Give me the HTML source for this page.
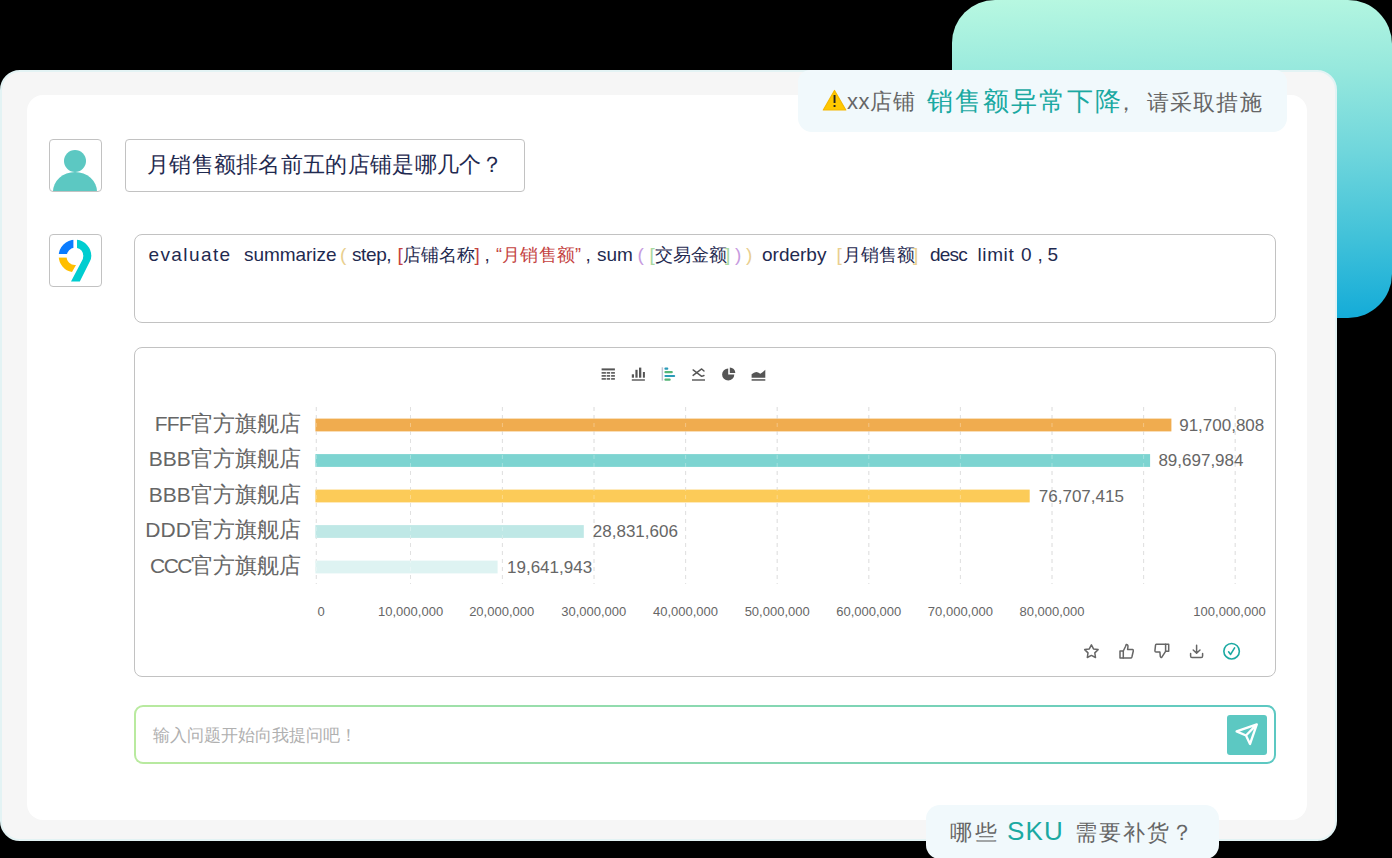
<!DOCTYPE html>
<html><head><meta charset="utf-8">
<style>
*{margin:0;padding:0;box-sizing:border-box}
html,body{width:1392px;height:858px;overflow:hidden;background:#000;font-family:"Liberation Sans",sans-serif}
.abs{position:absolute}
#grad{left:952px;top:0;width:440px;height:318px;border-radius:43px 44px 44px 0;background:linear-gradient(178deg,#b8f8e1 0%,#96e8dd 25%,#6fd6dc 50%,#42c2d9 75%,#13abd8 100%)}
#outer{left:0;top:70px;width:1337px;height:771px;border-radius:20px;background:#f6f6f6;border:2px solid #e3f3f4}
#inner{left:27px;top:95px;width:1280px;height:725px;border-radius:16px;background:#fff}
#pill1{left:798px;top:70px;width:489px;height:62px;border-radius:12px 12px 14px 14px;background:#f1f9fc}
#pill2{left:926px;top:805px;width:293px;height:54px;border-radius:14px;background:#f1f9fc}
.box{border:1px solid #c2c2c2;border-radius:4px;background:#fff}
.txt{white-space:nowrap;line-height:1}
svg{position:absolute;overflow:visible}
</style></head><body>
<div class="abs" id="grad"></div>
<div class="abs" id="outer"></div>
<div class="abs" id="inner"></div>
<div class="abs" id="pill1"></div>
<div class="abs" id="pill2"></div>
<svg style="left:0;top:0" width="1" height="1"><g>
<path d="M834.5,90.5 L845.8,110 L823.3,110 Z" fill="#ffc800" stroke="#f5b800" stroke-width="1.2" stroke-linejoin="round"/>
<rect x="833.6" y="95" width="1.9" height="8" fill="#222"/><rect x="833.6" y="105" width="1.9" height="2" fill="#222"/>
</g></svg>
<div class="abs txt" style="left:847.0px;top:90.9px;font-size:22px;color:#666;letter-spacing:0.6px;">xx店铺</div>
<div class="abs txt" style="left:927.0px;top:87.7px;font-size:26px;color:#1aa9a2;letter-spacing:2.0px;">销售额异常下降</div>
<div class="abs txt" style="left:1115.0px;top:91.9px;font-size:22px;color:#666;letter-spacing:0px;">，</div>
<div class="abs txt" style="left:1146.5px;top:91.9px;font-size:22px;color:#666;letter-spacing:1.3px;">请采取措施</div>
<div class="abs txt" style="left:950.0px;top:822.4px;font-size:22px;color:#666;letter-spacing:3px;">哪些</div>
<div class="abs txt" style="left:1007.0px;top:818.0px;font-size:26px;color:#1aa9a2;letter-spacing:1.2px;">SKU</div>
<div class="abs txt" style="left:1075.0px;top:822.4px;font-size:22px;color:#666;letter-spacing:2px;">需要补货？</div>
<div class="abs box" style="left:49px;top:139px;width:53px;height:53px;overflow:hidden">
  <div class="abs" style="left:14px;top:10px;width:22px;height:22px;border-radius:50%;background:#5cc8c2"></div>
  <div class="abs" style="left:3px;top:32px;width:44px;height:40px;border-radius:22px 22px 0 0/20px 20px 0 0;background:#5cc8c2"></div>
</div>
<div class="abs box" style="left:125px;top:139px;width:400px;height:53px"></div>
<div class="abs txt" style="left:147.0px;top:153.7px;font-size:22px;color:#1f2a50;letter-spacing:0.3px;">月销售额排名前五的店铺是哪几个？</div>
<div class="abs box" style="left:49px;top:234px;width:53px;height:53px"></div>
<svg style="left:0;top:0" width="1" height="1">
<path d="M58.7,256 A16.3,16.3 0 0 1 75,239.7 L75,247.7 A8.3,8.3 0 0 0 66.7,256 Z" fill="#0a7cff"/>
<path d="M58.7,256 A16.3,16.3 0 0 0 72,272 L76,265 A8.3,8.3 0 0 1 66.7,256 Z" fill="#ffbe00"/>
<rect x="73.4" y="238" width="3.6" height="12" fill="#fff"/>
<rect x="57" y="254" width="12" height="3.6" fill="#fff"/>
<path d="M77,239.8 A16.3,16.3 0 0 1 91.3,256 Q91.3,259 89.8,261.5 L79.8,281.5 L71,281.5 L81.8,261 Q83.3,258.5 83.3,256 A8.3,8.3 0 0 0 77,247.9 Z" fill="#00cdd0"/>
</svg>
<div class="abs box" style="left:134px;top:234px;width:1142px;height:89px;border-radius:8px"></div>
<div class="abs txt" style="left:148.5px;top:244.9px;font-size:19px;color:#1f2a50;letter-spacing:1.4px;">evaluate</div>
<div class="abs txt" style="left:244.0px;top:244.9px;font-size:19px;color:#1f2a50;letter-spacing:-0.05px;">summarize</div>
<div class="abs txt" style="left:340.0px;top:244.9px;font-size:19px;color:#e9cf8f;letter-spacing:0px;">(</div>
<div class="abs txt" style="left:352.0px;top:244.9px;font-size:19px;color:#1f2a50;letter-spacing:-0.4px;">step,</div>
<div class="abs txt" style="left:397.5px;top:244.9px;font-size:19px;color:#c4423f;letter-spacing:0px;">[</div>
<div class="abs txt" style="left:403.0px;top:245.8px;font-size:18px;color:#1f2a50;letter-spacing:0px;">店铺名称</div>
<div class="abs txt" style="left:474.5px;top:244.9px;font-size:19px;color:#c4423f;letter-spacing:0px;">]</div>
<div class="abs txt" style="left:484.5px;top:244.9px;font-size:19px;color:#1f2a50;letter-spacing:0px;">,</div>
<div class="abs txt" style="left:496.0px;top:245.8px;font-size:18px;color:#c4423f;letter-spacing:0.2px;">“月销售额”</div>
<div class="abs txt" style="left:585.5px;top:244.9px;font-size:19px;color:#1f2a50;letter-spacing:0px;">,</div>
<div class="abs txt" style="left:597.0px;top:244.9px;font-size:19px;color:#1f2a50;letter-spacing:0px;">sum</div>
<div class="abs txt" style="left:637.5px;top:244.9px;font-size:19px;color:#c79be0;letter-spacing:0px;">(</div>
<div class="abs txt" style="left:649.5px;top:244.9px;font-size:19px;color:#a9d8a0;letter-spacing:0px;">[</div>
<div class="abs txt" style="left:655.0px;top:245.8px;font-size:18px;color:#1f2a50;letter-spacing:0px;">交易金额</div>
<div class="abs txt" style="left:725.0px;top:244.9px;font-size:19px;color:#a9d8a0;letter-spacing:0px;">]</div>
<div class="abs txt" style="left:735.0px;top:244.9px;font-size:19px;color:#c79be0;letter-spacing:0px;">)</div>
<div class="abs txt" style="left:746.0px;top:244.9px;font-size:19px;color:#e9cf8f;letter-spacing:0px;">)</div>
<div class="abs txt" style="left:762.0px;top:244.9px;font-size:19px;color:#1f2a50;letter-spacing:0px;">orderby</div>
<div class="abs txt" style="left:836.5px;top:244.9px;font-size:19px;color:#e9cf8f;letter-spacing:0px;">[</div>
<div class="abs txt" style="left:842.5px;top:245.8px;font-size:18px;color:#1f2a50;letter-spacing:0px;">月销售额</div>
<div class="abs txt" style="left:913.0px;top:244.9px;font-size:19px;color:#e9cf8f;letter-spacing:0px;">]</div>
<div class="abs txt" style="left:930.0px;top:244.9px;font-size:19px;color:#1f2a50;letter-spacing:-0.8px;">desc</div>
<div class="abs txt" style="left:977.5px;top:244.9px;font-size:19px;color:#1f2a50;letter-spacing:0.6px;">limit</div>
<div class="abs txt" style="left:1021.0px;top:244.9px;font-size:19px;color:#1f2a50;letter-spacing:0px;">0</div>
<div class="abs txt" style="left:1037.5px;top:244.9px;font-size:19px;color:#1f2a50;letter-spacing:0px;">,</div>
<div class="abs txt" style="left:1047.5px;top:244.9px;font-size:19px;color:#1f2a50;letter-spacing:0px;">5</div>
<div class="abs box" style="left:134px;top:347px;width:1142px;height:330px;border-radius:8px"></div>
<svg style="left:0;top:0" width="1" height="1"><line x1="316.3" y1="407" x2="316.3" y2="584" stroke="#d4d4d4" stroke-width="1" stroke-dasharray="4 4"/><line x1="410.5" y1="407" x2="410.5" y2="584" stroke="#d4d4d4" stroke-width="1" stroke-dasharray="4 4"/><line x1="502.4" y1="407" x2="502.4" y2="584" stroke="#d4d4d4" stroke-width="1" stroke-dasharray="4 4"/><line x1="594.0" y1="407" x2="594.0" y2="584" stroke="#d4d4d4" stroke-width="1" stroke-dasharray="4 4"/><line x1="685.5999999999999" y1="407" x2="685.5999999999999" y2="584" stroke="#d4d4d4" stroke-width="1" stroke-dasharray="4 4"/><line x1="777.1999999999999" y1="407" x2="777.1999999999999" y2="584" stroke="#d4d4d4" stroke-width="1" stroke-dasharray="4 4"/><line x1="868.8" y1="407" x2="868.8" y2="584" stroke="#d4d4d4" stroke-width="1" stroke-dasharray="4 4"/><line x1="960.4" y1="407" x2="960.4" y2="584" stroke="#d4d4d4" stroke-width="1" stroke-dasharray="4 4"/><line x1="1052.0" y1="407" x2="1052.0" y2="584" stroke="#d4d4d4" stroke-width="1" stroke-dasharray="4 4"/><line x1="1143.6" y1="407" x2="1143.6" y2="584" stroke="#d4d4d4" stroke-width="1" stroke-dasharray="4 4"/><line x1="1235.1999999999998" y1="407" x2="1235.1999999999998" y2="584" stroke="#d4d4d4" stroke-width="1" stroke-dasharray="4 4"/><rect x="315.4" y="418.6" width="856.0" height="12.8" fill="#f0ac4f"/><rect x="315.4" y="454.1" width="834.7" height="12.8" fill="#7dd4d1"/><rect x="315.4" y="489.6" width="714.3" height="12.8" fill="#fccb58"/><rect x="315.4" y="525.1" width="268.4" height="12.8" fill="#bfe8e6"/><rect x="315.4" y="560.6" width="182.2" height="12.8" fill="#def3f2"/><line x1="316.3" y1="407" x2="316.3" y2="584" stroke="#ffffff" stroke-opacity="0.3" stroke-width="1" stroke-dasharray="4 4"/><line x1="410.5" y1="407" x2="410.5" y2="584" stroke="#ffffff" stroke-opacity="0.3" stroke-width="1" stroke-dasharray="4 4"/><line x1="502.4" y1="407" x2="502.4" y2="584" stroke="#ffffff" stroke-opacity="0.3" stroke-width="1" stroke-dasharray="4 4"/><line x1="594.0" y1="407" x2="594.0" y2="584" stroke="#ffffff" stroke-opacity="0.3" stroke-width="1" stroke-dasharray="4 4"/><line x1="685.5999999999999" y1="407" x2="685.5999999999999" y2="584" stroke="#ffffff" stroke-opacity="0.3" stroke-width="1" stroke-dasharray="4 4"/><line x1="777.1999999999999" y1="407" x2="777.1999999999999" y2="584" stroke="#ffffff" stroke-opacity="0.3" stroke-width="1" stroke-dasharray="4 4"/><line x1="868.8" y1="407" x2="868.8" y2="584" stroke="#ffffff" stroke-opacity="0.3" stroke-width="1" stroke-dasharray="4 4"/><line x1="960.4" y1="407" x2="960.4" y2="584" stroke="#ffffff" stroke-opacity="0.3" stroke-width="1" stroke-dasharray="4 4"/><line x1="1052.0" y1="407" x2="1052.0" y2="584" stroke="#ffffff" stroke-opacity="0.3" stroke-width="1" stroke-dasharray="4 4"/><line x1="1143.6" y1="407" x2="1143.6" y2="584" stroke="#ffffff" stroke-opacity="0.3" stroke-width="1" stroke-dasharray="4 4"/><line x1="1235.1999999999998" y1="407" x2="1235.1999999999998" y2="584" stroke="#ffffff" stroke-opacity="0.3" stroke-width="1" stroke-dasharray="4 4"/></svg>
<div class="abs txt" style="right:1091.2px;top:412.7px;font-size:22px;color:#666"><span style="font-size:21px;letter-spacing:-0.8px">FFF</span>官方旗舰店</div>
<div class="abs txt" style="right:1091.2px;top:448.2px;font-size:22px;color:#666"><span style="font-size:21px;letter-spacing:0px">BBB</span>官方旗舰店</div>
<div class="abs txt" style="right:1091.2px;top:483.7px;font-size:22px;color:#666"><span style="font-size:21px;letter-spacing:0px">BBB</span>官方旗舰店</div>
<div class="abs txt" style="right:1091.2px;top:519.2px;font-size:22px;color:#666"><span style="font-size:21px;letter-spacing:0px">DDD</span>官方旗舰店</div>
<div class="abs txt" style="right:1091.2px;top:554.7px;font-size:22px;color:#666"><span style="font-size:21px;letter-spacing:-1.6px">CCC</span>官方旗舰店</div>
<div class="abs txt" style="left:1179.2px;top:416.9px;font-size:17px;color:#666;letter-spacing:0px;">91,700,808</div>
<div class="abs txt" style="left:1158.4px;top:452.4px;font-size:17px;color:#666;letter-spacing:0px;">89,697,984</div>
<div class="abs txt" style="left:1038.8px;top:487.9px;font-size:17px;color:#666;letter-spacing:0px;">76,707,415</div>
<div class="abs txt" style="left:592.8px;top:523.4px;font-size:17px;color:#666;letter-spacing:0px;">28,831,606</div>
<div class="abs txt" style="left:507.0px;top:558.9px;font-size:17px;color:#666;letter-spacing:0px;">19,641,943</div>
<div class="abs txt" style="left:221.0px;width:200px;text-align:center;top:605.3px;font-size:13px;color:#666">0</div>
<div class="abs txt" style="left:310.6px;width:200px;text-align:center;top:605.3px;font-size:13px;color:#666">10,000,000</div>
<div class="abs txt" style="left:401.7px;width:200px;text-align:center;top:605.3px;font-size:13px;color:#666">20,000,000</div>
<div class="abs txt" style="left:493.8px;width:200px;text-align:center;top:605.3px;font-size:13px;color:#666">30,000,000</div>
<div class="abs txt" style="left:585.5px;width:200px;text-align:center;top:605.3px;font-size:13px;color:#666">40,000,000</div>
<div class="abs txt" style="left:677.2px;width:200px;text-align:center;top:605.3px;font-size:13px;color:#666">50,000,000</div>
<div class="abs txt" style="left:768.8px;width:200px;text-align:center;top:605.3px;font-size:13px;color:#666">60,000,000</div>
<div class="abs txt" style="left:860.4px;width:200px;text-align:center;top:605.3px;font-size:13px;color:#666">70,000,000</div>
<div class="abs txt" style="left:952.0px;width:200px;text-align:center;top:605.3px;font-size:13px;color:#666">80,000,000</div>
<div class="abs txt" style="left:1129.5px;width:200px;text-align:center;top:605.3px;font-size:13px;color:#666">100,000,000</div>
<svg style="left:0;top:0" width="1" height="1">
<g fill="#555">
<rect x="601.6" y="368.4" width="13.3" height="2"/>
<rect x="601.6" y="372.1" width="4.3" height="1.6"/><rect x="606.7" y="372.1" width="3.4" height="1.6"/><rect x="611.1" y="372.1" width="3.8" height="1.6"/>
<rect x="601.6" y="375.1" width="4.3" height="1.6"/><rect x="606.7" y="375.1" width="3.4" height="1.6"/><rect x="611.1" y="375.1" width="3.8" height="1.6"/>
<rect x="601.6" y="378.1" width="4.3" height="1.6"/><rect x="606.7" y="378.1" width="3.4" height="1.6"/><rect x="611.1" y="378.1" width="3.8" height="1.6"/>
<rect x="631.8" y="379.3" width="13.1" height="1.4"/>
<rect x="631.8" y="374.3" width="2.2" height="3.4"/><rect x="635.4" y="369.8" width="2.2" height="7.9"/><rect x="639" y="367.6" width="2.3" height="10.1"/><rect x="642.9" y="372" width="2" height="5.7"/>
</g>
<rect x="661.6" y="367.3" width="1.5" height="13.4" fill="#c2c2d2"/>
<rect x="664.4" y="367.5" width="3.9" height="2.2" rx="1" fill="#2a9bb8"/>
<rect x="664.4" y="371.1" width="8.4" height="2.1" rx="1" fill="#55b577"/>
<rect x="664.4" y="374.9" width="10.8" height="2.1" rx="1" fill="#2a9bb8"/>
<rect x="664.4" y="378.6" width="6.3" height="2.1" rx="1" fill="#55b577"/>
<g fill="none" stroke="#555" stroke-width="1.4" stroke-linecap="round" stroke-linejoin="round">
<path d="M693.1,369.9 L701.7,376.4 L704,375.5"/>
<path d="M693.1,375.4 L701.7,368.9 L704,371"/>
</g>
<rect x="692" y="379.3" width="13" height="1.4" fill="#555"/>
<path d="M728.2,374.5 L728.2,368.4 A6.1,6.1 0 1 0 734.3,374.5 Z" fill="#555"/>
<path d="M729.8,372.9 L729.8,367.4 A5.5,5.5 0 0 1 735.3,372.9 Z" fill="#555"/>
<path d="M751.6,374.3 Q754,372.6 756.3,372.1 Q758,372.4 760.3,373.7 Q763,372 765.3,369.8 L765.3,377.8 L751.6,377.8 Z" fill="#555"/>
<rect x="751.6" y="379.2" width="13.7" height="1.5" fill="#555"/>
</svg>
<svg style="left:0;top:0" width="1" height="1">
<g fill="none" stroke="#666" stroke-width="1.5" stroke-linejoin="round" stroke-linecap="round">
<path d="M1091.4,644.8 L1093.5,648.9 L1098.1,649.6 L1094.8,652.9 L1095.5,657.5 L1091.4,655.4 L1087.3,657.5 L1088,652.9 L1084.7,649.6 L1089.3,648.9 Z"/>
<path d="M1120,651 L1123.3,651 L1123.3,658 L1120,658 Z"/>
<path d="M1123.3,651 L1125.5,646.5 L1126.2,644.6 Q1127.8,644.3 1128,646 L1127.6,649.6 L1132.6,649.6 Q1133.5,649.8 1133.3,651 L1131.9,657 Q1131.6,658 1130.7,658 L1123.3,658"/>
<path d="M1165.6,644.3 L1168.7,644.3 L1168.7,651.3 L1165.6,651.3 Z"/>
<path d="M1165.6,644.3 L1156.3,644.3 Q1155.6,644.4 1155.5,645.3 L1154.9,651 Q1155,652 1156,652 L1159.9,652 L1160.3,656.5 Q1160.8,657.8 1161.7,657.3 L1165.6,651.3"/>
<path d="M1196.6,645.2 L1196.6,652.7 M1193.2,650 L1196.6,653.2 L1200,650"/>
<path d="M1190.6,653.5 L1190.6,656 Q1190.6,657.6 1192,657.6 L1201.2,657.6 Q1202.6,657.6 1202.6,656 L1202.6,653.5"/>
</g>
<circle cx="1231.6" cy="651.2" r="7.75" fill="none" stroke="#1aa9a2" stroke-width="1.6"/>
<path d="M1228.6,651.8 L1230.6,654.4 L1234.6,647.9" fill="none" stroke="#1aa9a2" stroke-width="1.6" stroke-linecap="round" stroke-linejoin="round"/>
</svg>
<div class="abs" style="left:134px;top:705px;width:1142px;height:59px;border-radius:9px;padding:2px;background:linear-gradient(90deg,#b9ea9f,#5cc8c2)">
  <div style="width:100%;height:100%;background:#fff;border-radius:7px"></div>
</div>
<div class="abs txt" style="left:153.0px;top:727.2px;font-size:17px;color:#b0b0b0;letter-spacing:0px;">输入问题开始向我提问吧！</div>
<div class="abs" style="left:1227px;top:715px;width:40px;height:40px;border-radius:3px;background:#5cc8c2"></div>
<svg style="left:0;top:0" width="1" height="1">
<path d="M1236.6,731.4 L1256.8,724.4 L1250,744 L1246,735.5 Z M1246,735.5 L1256.8,724.4" fill="none" stroke="#fff" stroke-width="2.3" stroke-linejoin="round" stroke-linecap="round"/>
</svg>
</body></html>
